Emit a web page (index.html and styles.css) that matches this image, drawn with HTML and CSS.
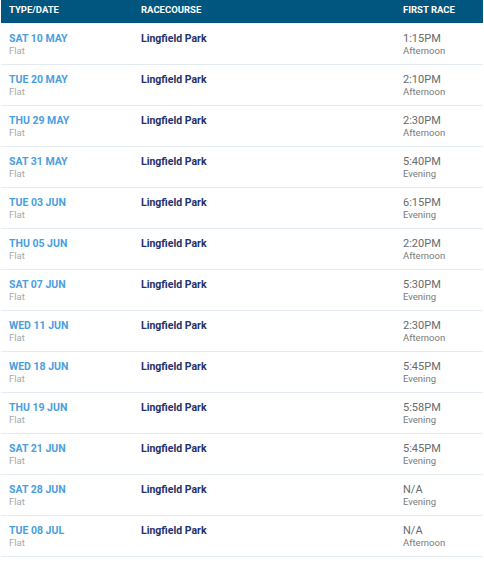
FILE: index.html
```html
<!DOCTYPE html>
<html>
<head>
<meta charset="utf-8">
<link rel="stylesheet" href="styles.css">
</head>
<body>
<div class="table">
  <div class="head">
    <div class="c1">TYPE/DATE</div>
    <div class="c2">RACECOURSE</div>
    <div class="c3">FIRST RACE</div>
  </div>
  <div class="rows">
  <div class="row"><div class="c1"><div class="date">SAT 10 MAY</div><div class="sub">Flat</div></div><div class="c2"><div class="course">Lingfield Park</div></div><div class="c3"><div class="time">1:15PM</div><div class="sub2">Afternoon</div></div></div>
  <div class="row"><div class="c1"><div class="date">TUE 20 MAY</div><div class="sub">Flat</div></div><div class="c2"><div class="course">Lingfield Park</div></div><div class="c3"><div class="time">2:10PM</div><div class="sub2">Afternoon</div></div></div>
  <div class="row"><div class="c1"><div class="date">THU 29 MAY</div><div class="sub">Flat</div></div><div class="c2"><div class="course">Lingfield Park</div></div><div class="c3"><div class="time">2:30PM</div><div class="sub2">Afternoon</div></div></div>
  <div class="row"><div class="c1"><div class="date">SAT 31 MAY</div><div class="sub">Flat</div></div><div class="c2"><div class="course">Lingfield Park</div></div><div class="c3"><div class="time">5:40PM</div><div class="sub2">Evening</div></div></div>
  <div class="row"><div class="c1"><div class="date">TUE 03 JUN</div><div class="sub">Flat</div></div><div class="c2"><div class="course">Lingfield Park</div></div><div class="c3"><div class="time">6:15PM</div><div class="sub2">Evening</div></div></div>
  <div class="row"><div class="c1"><div class="date">THU 05 JUN</div><div class="sub">Flat</div></div><div class="c2"><div class="course">Lingfield Park</div></div><div class="c3"><div class="time">2:20PM</div><div class="sub2">Afternoon</div></div></div>
  <div class="row"><div class="c1"><div class="date">SAT 07 JUN</div><div class="sub">Flat</div></div><div class="c2"><div class="course">Lingfield Park</div></div><div class="c3"><div class="time">5:30PM</div><div class="sub2">Evening</div></div></div>
  <div class="row"><div class="c1"><div class="date">WED 11 JUN</div><div class="sub">Flat</div></div><div class="c2"><div class="course">Lingfield Park</div></div><div class="c3"><div class="time">2:30PM</div><div class="sub2">Afternoon</div></div></div>
  <div class="row"><div class="c1"><div class="date">WED 18 JUN</div><div class="sub">Flat</div></div><div class="c2"><div class="course">Lingfield Park</div></div><div class="c3"><div class="time">5:45PM</div><div class="sub2">Evening</div></div></div>
  <div class="row"><div class="c1"><div class="date">THU 19 JUN</div><div class="sub">Flat</div></div><div class="c2"><div class="course">Lingfield Park</div></div><div class="c3"><div class="time">5:58PM</div><div class="sub2">Evening</div></div></div>
  <div class="row"><div class="c1"><div class="date">SAT 21 JUN</div><div class="sub">Flat</div></div><div class="c2"><div class="course">Lingfield Park</div></div><div class="c3"><div class="time">5:45PM</div><div class="sub2">Evening</div></div></div>
  <div class="row"><div class="c1"><div class="date">SAT 28 JUN</div><div class="sub">Flat</div></div><div class="c2"><div class="course">Lingfield Park</div></div><div class="c3"><div class="time">N/A</div><div class="sub2">Evening</div></div></div>
  <div class="row"><div class="c1"><div class="date">TUE 08 JUL</div><div class="sub">Flat</div></div><div class="c2"><div class="course">Lingfield Park</div></div><div class="c3"><div class="time">N/A</div><div class="sub2">Afternoon</div></div></div>
  </div>
</div>
</body>
</html>
```
FILE: styles.css
```css
html, body {
  margin: 0;
  padding: 0;
  background: #ffffff;
}
body {
  font-family: Roboto, "Liberation Sans", Arial, sans-serif;
}
.table {
  margin-left: 1px;
  width: 482px;
}
.head, .row {
  display: grid;
  grid-template-columns: 132px 262px 88px;
}
.head {
  background: #00567f;
  color: #ffffff;
  height: 23px;
  font-size: 9.5px;
  font-weight: 700;
  line-height: 20px;
}
.rows {
  padding-top: 1px;
}
.c1, .c2, .c3 {
  padding-left: 8px;
}
.row {
  height: 40px;
  border-bottom: 1px solid #e4ebf2;
  box-sizing: content-box;
}
.row > div {
  padding-top: 9px;
}
.date {
  color: #4a9ee0;
  font-size: 10.5px;
  font-weight: 700;
  line-height: 12px;
}
.sub {
  color: #a8a8a8;
  font-size: 9.5px;
  line-height: 11px;
}
.course {
  color: #26306a;
  font-size: 10.5px;
  font-weight: 700;
  line-height: 12px;
}
.time {
  color: #6a6a6a;
  font-size: 11px;
  line-height: 12px;
}
.sub2 {
  color: #7a7a7a;
  font-size: 9.5px;
  line-height: 11px;
}
```
